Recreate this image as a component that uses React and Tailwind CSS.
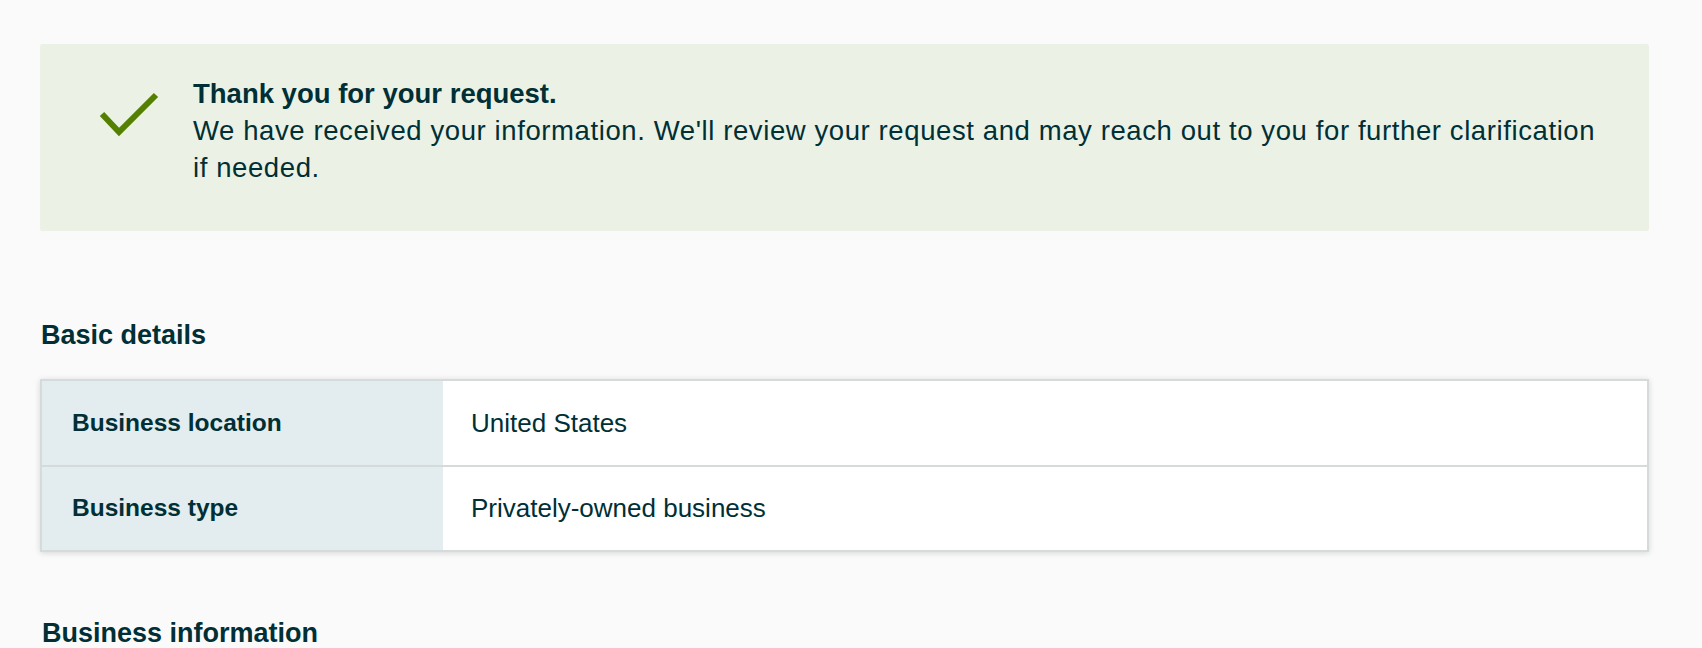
import React from "react";

const rows = [
  { label: "Business location", value: "United States" },
  { label: "Business type", value: "Privately-owned business" },
];

function CheckIcon() {
  return (
    <svg width="60" height="46" viewBox="0 0 60 46" className="shrink-0">
      <path d="M3 22 L20 40 L57 3" fill="none" stroke="#538000" strokeWidth="6" />
    </svg>
  );
}

function SuccessBanner() {
  return (
    <div className="flex bg-[#ebf2e5] pt-[31px] pb-[45px] pl-[59px] rounded-[2px]">
      <div className="pt-[17px] w-[94px] shrink-0">
        <CheckIcon />
      </div>
      <div className="leading-[37px]">
        <div className="font-bold text-[27.5px]">Thank you for your request.</div>
        <div className="text-[27.5px] tracking-[0.6px] pr-[40px]">
          We have received your information. We'll review your request and may reach out to you for further clarification
          if needed.
        </div>
      </div>
    </div>
  );
}

function DetailsTable() {
  return (
    <div className="border-2 border-[#d5dbdb] bg-white shadow-[0_1px_6px_rgba(0,0,0,0.15)]">
      {rows.map((row, idx) => (
        <div
          key={row.label}
          className={idx > 0 ? "flex h-[85px] border-t-2 border-[#d5dbdb]" : "flex h-[84px]"}
        >
          <div className="w-[401px] shrink-0 bg-[#e3ecee] flex items-center pl-[30px] font-bold text-[24.5px]">
            {row.label}
          </div>
          <div className="flex items-center pl-[28px] text-[26px]">{row.value}</div>
        </div>
      ))}
    </div>
  );
}

export default function App() {
  return (
    <div className="min-h-[648px] bg-[#fafafa] text-[#002f36] pl-[40px] pr-[53px] pt-[44px] font-['Liberation_Sans',Arial,sans-serif]">
      <SuccessBanner />
      <h2 className="mt-[86px] font-bold text-[27px] leading-[37px] pl-[1px]">Basic details</h2>
      <div className="mt-[25px]">
        <DetailsTable />
      </div>
      <h2 className="mt-[63px] font-bold text-[27px] leading-[37px] pl-[2px]">Business information</h2>
    </div>
  );
}
